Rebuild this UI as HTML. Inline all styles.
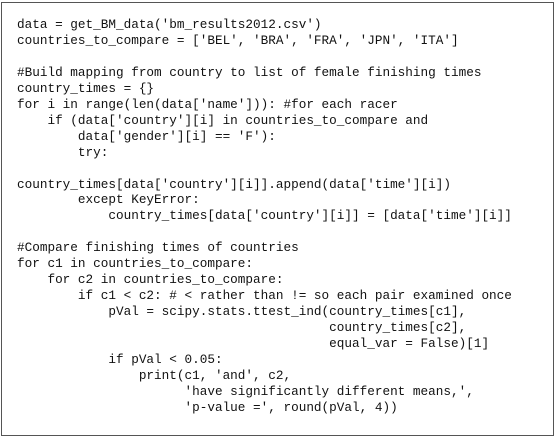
<!DOCTYPE html>
<html><head><style>
html,body{margin:0;padding:0;background:#fff;width:560px;height:440px;overflow:hidden}
.box{position:absolute;left:1px;top:2px;width:551px;height:432px;border:1.5px solid #555;}
pre{position:absolute;left:17px;top:17px;margin:0;font-family:"Liberation Mono",monospace;font-size:12.7px;line-height:15.95px;color:#111;}
</style></head><body>
<div class="box"></div>
<pre>data = get_BM_data('bm_results2012.csv')
countries_to_compare = ['BEL', 'BRA', 'FRA', 'JPN', 'ITA']

#Build mapping from country to list of female finishing times
country_times = {}
for i in range(len(data['name'])): #for each racer
    if (data['country'][i] in countries_to_compare and
        data['gender'][i] == 'F'):
        try:

country_times[data['country'][i]].append(data['time'][i])
        except KeyError:
            country_times[data['country'][i]] = [data['time'][i]]

#Compare finishing times of countries
for c1 in countries_to_compare:
    for c2 in countries_to_compare:
        if c1 &lt; c2: # &lt; rather than != so each pair examined once
            pVal = scipy.stats.ttest_ind(country_times[c1],
                                         country_times[c2],
                                         equal_var = False)[1]
            if pVal &lt; 0.05:
                print(c1, 'and', c2,
                      'have significantly different means,',
                      'p-value =', round(pVal, 4))</pre>
</body></html>
